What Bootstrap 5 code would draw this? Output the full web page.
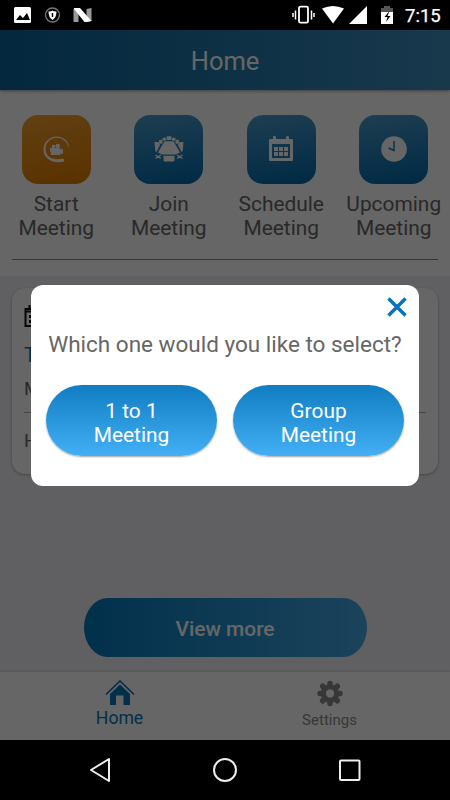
<!DOCTYPE html>
<html lang="en">
<head>
<meta charset="utf-8">
<meta name="viewport" content="width=device-width, initial-scale=1">
<title>Home</title>
<link href="https://cdn.jsdelivr.net/npm/bootstrap@5.3.0/dist/css/bootstrap.min.css" rel="stylesheet">
<style>
body{font-family:Roboto,"Liberation Sans",sans-serif;width:450px;height:800px;overflow:hidden;background:#000}
svg{display:block;flex:none}
.status-bar{height:30px;background:#000}
.clock{font-size:18.5px;line-height:20px;padding-top:1px;-webkit-text-stroke:.25px #fff}
.app{height:710px;background:#f0f0f5}
.top-bar{height:60px;padding-top:3px;font-size:25.5px;color:#fff;background:linear-gradient(90deg,#09639b,#3e8fbf);box-shadow:0 1px 3px rgba(0,0,0,.4);position:relative}
.actions{height:185.5px;padding-top:24.5px}
.action{width:112.5px;font-size:20.9px;line-height:24px;color:#666}
.tile{width:69px;height:69px;border-radius:16px;margin-bottom:8px;background:linear-gradient(170deg,#4b9ccc,#0068a8)}
.tile-orange{background:linear-gradient(170deg,#f2a02e,#e07c00)}
.divider{height:1px;background:#858585}
.section-line{height:1.5px;margin:auto 12px 15.5px}
.meeting{margin:12px 12px 0;height:186px;border-radius:13px;box-shadow:0 1px 3px rgba(0,0,0,.3);padding:16.5px 12px}
.meeting-line{font-size:18.5px;line-height:22px;color:#666}
.meeting-title{font-size:20.5px;color:#0675ba;margin-top:16px}
.meeting-room{margin-top:12px}
.meeting .divider{margin-top:12px;background:#aaa}
.meeting-host{margin-top:17px}
.more{width:283px;height:59px;border-radius:24px/30px;font-size:20.9px;font-weight:500;color:#fff;background:linear-gradient(90deg,#0479bd,#45a8e3);margin-top:124.5px}
.more:hover{color:#fff}
.tabs{height:68px;margin-top:15px;background:#fff;box-shadow:0 -1px 2px rgba(0,0,0,.12)}
.tab-left{padding-right:1px;padding-left:15px;padding-top:7.5px}
.tab-home{font-size:17.6px;line-height:20px;color:#0675ba;padding-top:2px}
.tab-set{font-size:15px;line-height:18px;color:#8b8b8b;padding-top:4px}
.scrim{inset:30px 0 60px;background:rgba(0,0,0,.6)}
.dialog-box{left:31px;top:284.5px;width:388px;height:201px;border-radius:12px;background:#fff}
.question{font-size:22.5px;line-height:26px;color:#666;margin-top:10.5px;white-space:nowrap}
.choices{margin-top:28px}
.choice{width:171px;height:71px;padding:4px 0 0;border-radius:36px;font-size:20.9px;line-height:24px;color:#fff;background:linear-gradient(#107dc2,#43b0f6);box-shadow:0 1px 2px rgba(0,0,0,.35);border:0}
.nav-keys{height:60px;background:#000}
</style>
</head>
<body>
<header class="status-bar d-flex align-items-center text-white">
<svg width="285" height="30"><rect x="14" y="7" width="17" height="16" rx="1.5" fill="#fff"/><path d="M16 20l4-5 3 3 4-5 3 7z"/><circle cx="52.500" cy="15" r="7" fill="none" stroke="#777" stroke-width="1.3"/><path d="M48.500 11.500q4-.2 4-1 0 .8 4 1 0 6-4 8.500-4-2.500-4-8.500" fill="#fff"/><path d="M52.500 13v4" stroke="#000" stroke-width="1.500"/><path d="M73.500 9l5-1v14h-5zm13 0l5-1v13l-5 1z" fill="#999"/><path d="M74 8h6l11.500 13-5 1h-2L74 9z" fill="#fff"/></svg>
<svg width="120" height="30"><rect x="14" y="6.700" width="9" height="16" rx="1.500" fill="none" stroke="#fff" stroke-width="1.800"/><path d="M10.500 10.500v9M8 13v4M26.500 10.500v9M29 13v4" stroke="#fff" stroke-width="1.500"/><path d="M37 8.500q11-5 22 0L48 23.500z" fill="#fff"/><path d="M82 6v18H64z" fill="#fff"/><path d="M99 6h6v2h3v4H96V8h3z" fill="#555"/><path d="M96 12h12v12H96z" fill="#fff"/><path d="M104.500 11l-5 6h3l-1.500 5 4.500-6h-3z"/></svg>
<span class="clock">7:15</span>
</header>
<main class="app d-flex flex-column">
<div class="top-bar d-flex align-items-center justify-content-center">Home</div>
<section class="actions bg-white d-flex flex-column">
<div class="d-flex text-center">
<div class="action d-flex flex-column align-items-center"><div class="tile tile-orange d-flex align-items-center justify-content-center"><svg width="34" height="34" fill="#fff"><path d="M25 29.500C16 32 4.500 28 4.500 17.500 4.500 10 11 4.500 17.500 4.500c7 0 13 5 12.500 13-.7-7-6-11.800-12.500-11.800C11 5.700 6.500 11 6.500 17c0 8 7.500 12 17.500 9.500q2 1 1 3z"/><circle cx="14.500" cy="14.500" r="1.800"/><circle cx="18.700" cy="14" r="2.200"/><path d="M11 16h10.500v2l2.500-1.500v6L21.500 21v2H12v-3h-1z"/></svg></div>Start<br>Meeting</div>
<div class="action d-flex flex-column align-items-center"><div class="tile d-flex align-items-center justify-content-center"><svg width="34" height="34" fill="#fff"><path d="M12.500 9.200h9L28 20.500l-4 2H10l-4-2z"/><rect x="14.500" y="4.200" width="5" height="3.800" rx="1"/><rect x="10.500" y="5.800" width="3.500" height="3" rx="1"/><rect x="20" y="5.800" width="3.500" height="3" rx="1"/><rect x="7" y="7.800" width="3.500" height="4" rx="1"/><rect x="23.500" y="7.800" width="3.500" height="4" rx="1"/><path d="M2.500 10h4l1.500 3-3.500 7-1.200-1zM31.500 10h-4L26 13l3.500 7 1.200-1zM11.500 23.800h11v4.700l-1 1h-9l-1-1z"/><path d="M3.500 23l5.500 3.500M3.500 26.500L9 23M25 23l5.500 3.500M25 26.500l5.500-3.500" stroke="#fff" stroke-width="1.200"/></svg></div>Join<br>Meeting</div>
<div class="action d-flex flex-column align-items-center"><div class="tile d-flex align-items-center justify-content-center"><svg width="24" height="28" fill="#fff"><path fill-rule="evenodd" d="M1 4h3V2q1.500-2.500 3 0v2h10V2q1.500-2.500 3 0v2h3q1 0 1 1v20q0 1-1 1H1q-1 0-1-1V5q0-1 1-1zm2 5v14h18V9z"/><path d="M5 12h4v4H5zm5 0h4v4h-4zm5 0h4v4h-4zM5 17h4v4H5zm5 0h4v4h-4zm5 0h4v4h-4z"/></svg></div>Schedule<br>Meeting</div>
<div class="action d-flex flex-column align-items-center"><div class="tile d-flex align-items-center justify-content-center"><svg width="26" height="26"><circle cx="13" cy="13" r="12.800" fill="#fff"/><path d="M13 5v9.500L7.500 12" fill="none" stroke="#237cb4" stroke-width="1.500"/></svg></div>Upcoming<br>Meeting</div>
</div>
<div class="divider section-line"></div>
</section>
<article class="meeting bg-white">
<svg width="22" height="24"><path d="M1.500 5h19v17h-19zM5.500 1v5M16.500 1v5M1 7.500h20" fill="none" stroke="#111" stroke-width="2"/><path d="M5 11h3v3H5zm5 0h3v3h-3zm5 0h3v3h-3zM5 16h3v3H5zm5 0h3v3h-3zm5 0h3v3h-3z"/></svg>
<div class="meeting-line meeting-title">T</div>
<div class="meeting-line meeting-room">M</div>
<div class="divider"></div>
<div class="meeting-line meeting-host">H</div>
</article>
<button class="more btn border-0 mx-auto p-0 pt-1">View more</button>
<nav class="tabs d-flex text-center">
<div class="tab-left col-6 d-flex flex-column align-items-center"><svg width="30" height="26" fill="#0675ba"><path d="M1 14.500L15 1l14 13.500" fill="none" stroke="#0675ba" stroke-width="1.700"/><path d="M15 4.500L25 14v11h-6.500V15.500h-7.500V25H5V14z"/></svg><span class="tab-home">Home</span></div>
<div class="col-6 d-flex flex-column align-items-center pt-2 pe-3"><svg width="26" height="27" viewBox="-13 -13 26 26"><g stroke="#8b8b8b" stroke-width="5.500" stroke-linecap="round"><path d="M0-10V-7M0 10V7M-10 0H-7M10 0H7M-7.300-7.300L-5-5M7.300 7.300L5 5M7.300-7.300L5-5M-7.300 7.300L-5 5"/></g><circle r="6.700" fill="none" stroke="#8b8b8b" stroke-width="5"/></svg><span class="tab-set">Settings</span></div>
</nav>
</main>
<footer class="nav-keys"><svg width="450" height="60" fill="none" stroke="#eee" stroke-width="2"><path d="M91 30l18-11v22z" stroke-linejoin="round"/><circle cx="225" cy="30" r="11"/><rect x="340" y="20.500" width="19.500" height="19.500" rx="1"/></svg></footer>
<div class="scrim position-absolute"></div>
<section class="dialog-box position-absolute" role="dialog">
<div class="d-flex justify-content-end pt-2 pe-2"><svg width="28" height="28"><path d="M5.500 5.500l17 17M22.500 5.500l-17 17" stroke="#0673bb" stroke-width="3.500"/></svg></div>
<div class="question text-center">Which one would you like to select?</div>
<div class="choices d-flex justify-content-center gap-3"><button class="choice">1 to 1<br>Meeting</button><button class="choice">Group<br>Meeting</button></div>
</section>
<script src="https://cdn.jsdelivr.net/npm/bootstrap@5.3.0/dist/js/bootstrap.bundle.min.js"></script>
</body>
</html>
